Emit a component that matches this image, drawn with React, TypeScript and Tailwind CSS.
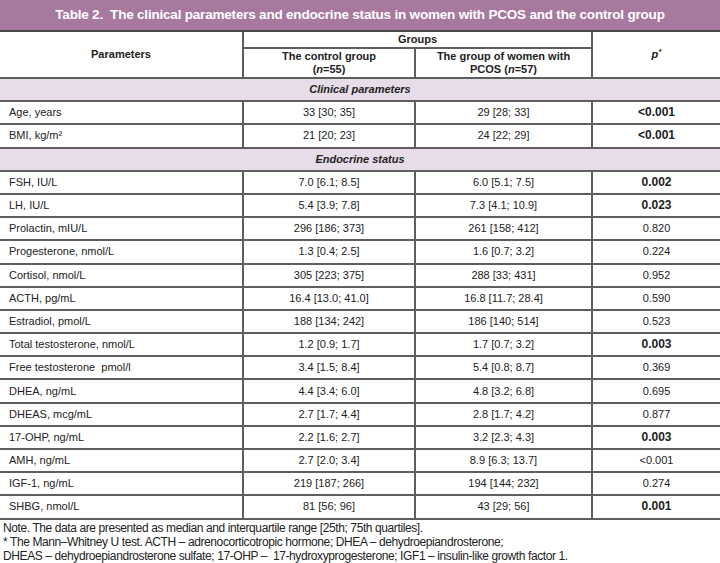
const rows1 = [
  { name: "Age, years", a: "33 [30; 35]", b: "29 [28; 33]", p: "<0.001", bold: true },
  { name: "BMI, kg/m²", a: "21 [20; 23]", b: "24 [22; 29]", p: "<0.001", bold: true },
];

const rows2 = [
  { name: "FSH, IU/L", a: "7.0 [6.1; 8.5]", b: "6.0 [5.1; 7.5]", p: "0.002", bold: true },
  { name: "LH, IU/L", a: "5.4 [3.9; 7.8]", b: "7.3 [4.1; 10.9]", p: "0.023", bold: true },
  { name: "Prolactin, mIU/L", a: "296 [186; 373]", b: "261 [158; 412]", p: "0.820" },
  { name: "Progesterone, nmol/L", a: "1.3 [0.4; 2.5]", b: "1.6 [0.7; 3.2]", p: "0.224" },
  { name: "Cortisol, nmol/L", a: "305 [223; 375]", b: "288 [33; 431]", p: "0.952" },
  { name: "ACTH, pg/mL", a: "16.4 [13.0; 41.0]", b: "16.8 [11.7; 28.4]", p: "0.590" },
  { name: "Estradiol, pmol/L", a: "188 [134; 242]", b: "186 [140; 514]", p: "0.523" },
  { name: "Total testosterone, nmol/L", a: "1.2 [0.9; 1.7]", b: "1.7 [0.7; 3.2]", p: "0.003", bold: true },
  { name: "Free testosterone\u00a0 pmol/l", a: "3.4 [1.5; 8.4]", b: "5.4 [0.8; 8.7]", p: "0.369" },
  { name: "DHEA, ng/mL", a: "4.4 [3.4; 6.0]", b: "4.8 [3.2; 6.8]", p: "0.695" },
  { name: "DHEAS, mcg/mL", a: "2.7 [1.7; 4.4]", b: "2.8 [1.7; 4.2]", p: "0.877" },
  { name: "17-OHP, ng/mL", a: "2.2 [1.6; 2.7]", b: "3.2 [2.3; 4.3]", p: "0.003", bold: true },
  { name: "AMH, ng/mL", a: "2.7 [2.0; 3.4]", b: "8.9 [6.3; 13.7]", p: "<0.001" },
  { name: "IGF-1, ng/mL", a: "219 [187; 266]", b: "194 [144; 232]", p: "0.274" },
  { name: "SHBG, nmol/L", a: "81 [56; 96]", b: "43 [29; 56]", p: "0.001", bold: true },
];

type Row = { name: string; a: string; b: string; p: string; bold?: boolean };

function DataRow({ r }: { r: Row }) {
  return (
    <tr className="h-[23.2px] border-b-2 border-[#5e5e5e]">
      <td className="pl-[9px] text-left">{r.name}</td>
      <td className="border-l-2 border-[#5e5e5e] text-center">{r.a}</td>
      <td className="border-l-2 border-[#5e5e5e] text-center">{r.b}</td>
      <td className={`border-l-2 border-[#5e5e5e] text-center ${r.bold ? "font-bold text-[12px]" : ""}`}>{r.p}</td>
    </tr>
  );
}

function Section({ label }: { label: string }) {
  return (
    <tr className="h-[23.2px] border-b-2 border-[#5e5e5e] bg-[#e7dde8]">
      <td colSpan={4} className="text-center font-bold italic">
        {label}
      </td>
    </tr>
  );
}

export default function App() {
  return (
    <div className="w-[720px] h-[563px] bg-white text-[#222] font-['Liberation_Sans',Arial,sans-serif] overflow-hidden">
      <div className="h-[32px] bg-[#a7799f] border-b-2 border-[#4a4a4a] flex items-center justify-center text-white font-bold text-[13.5px] tracking-[-0.2px]">
        Table 2.&nbsp; The clinical parameters and endocrine status in women with PCOS and the control group
      </div>
      <table className="w-[720px] border-collapse table-fixed text-[11px] leading-[13px]">
        <colgroup>
          <col className="w-[243px]" />
          <col className="w-[172px]" />
          <col className="w-[177px]" />
          <col className="w-[128px]" />
        </colgroup>
        <tbody>
          <tr className="h-[16px]">
            <td rowSpan={2} className="text-center font-bold border-b-2 border-[#5e5e5e]">
              Parameters
            </td>
            <td colSpan={2} className="text-center font-bold border-l-2 border-b-2 border-[#5e5e5e]">
              Groups
            </td>
            <td rowSpan={2} className="text-center font-bold italic border-l-2 border-b-2 border-[#5e5e5e]">
              p<sup className="text-[8px]">*</sup>
            </td>
          </tr>
          <tr className="h-[30px]">
            <td className="text-center font-bold border-l-2 border-b-2 border-[#5e5e5e]">
              The control group
              <br />(<i>n</i>=55)
            </td>
            <td className="text-center font-bold border-l-2 border-b-2 border-[#5e5e5e]">
              The group of women with
              <br />
              PCOS (<i>n</i>=57)
            </td>
          </tr>
          <Section label="Clinical parameters" />
          {rows1.map((r) => (
            <DataRow key={r.name} r={r} />
          ))}
          <Section label="Endocrine status" />
          {rows2.map((r) => (
            <DataRow key={r.name} r={r} />
          ))}
        </tbody>
      </table>
      <div className="pt-[1px] pl-[3px] text-[12px] leading-[14px] tracking-[-0.4px] text-[#222] whitespace-nowrap">
        <div>Note. The data are presented as median and interquartile range [25th; 75th quartiles].</div>
        <div>* The Mann–Whitney U test. ACTH – adrenocorticotropic hormone; DHEA – dehydroepiandrosterone;</div>
        <div>DHEAS – dehydroepiandrosterone sulfate; 17-OHP –&nbsp; 17-hydroxyprogesterone; IGF1 – insulin-like growth factor 1.</div>
      </div>
    </div>
  );
}
